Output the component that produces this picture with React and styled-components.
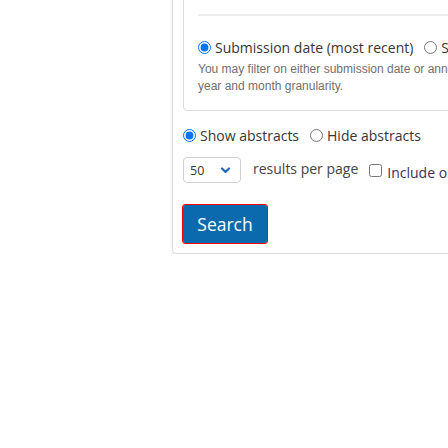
import React from 'react'
import styled, { createGlobalStyle } from 'styled-components'

const GlobalStyle = createGlobalStyle`
  html, body {
    margin: 0;
    padding: 0;
    background: #fff;
    overflow: hidden;
  }
  body {
    font-family: "Open Sans", "Noto Sans", sans-serif;
    color: #363636;
  }
`

const Page = styled.div`
  padding-left: 172px;
  width: 460px;
`

const Card = styled.div`
  margin-top: -30px;
  padding: 10px 10px 10px 10px;
  border: 1px solid #dcdcdc;
  border-radius: 4px;
  box-shadow: 0 2px 3px rgba(0, 0, 0, 0.12);
  display: flex;
  flex-direction: column;
  align-items: flex-start;
`

const Fieldset = styled.div`
  align-self: stretch;
  border: 1px solid #dcdcdc;
  border-radius: 4px;
  padding: 0 0 15px 14px;
`

const Rule = styled.div`
  margin-top: 32px;
  height: 2px;
  background: #ececec;
`

const RadioRow = styled.div`
  display: flex;
  align-items: center;
  height: 22px;
  margin-top: ${p => p.$top}px;
  font-size: 14px;
  white-space: nowrap;
`

const Choice = styled.label`
  display: flex;
  align-items: center;
  gap: 4px;
  margin-right: 11px;
  color: #363636;
`

const Radio = styled.input.attrs({ type: 'radio' })`
  margin: 0;
  width: 13px;
  height: 13px;
`

const Help = styled.p`
  margin: 3px 0 0 0;
  font-family: "Liberation Sans", Arial, sans-serif;
  font-size: 12px;
  line-height: 17px;
  color: #707070;
  white-space: nowrap;
`

const OptionsRow = styled.div`
  display: flex;
  align-items: center;
  margin-top: 11px;
  white-space: nowrap;
`

const SelectBox = styled.div`
  position: relative;
  width: 58px;
  height: 26px;
  box-sizing: border-box;
  border: 1px solid #cfcfcf;
  border-radius: 4px;
`

const Select = styled.select`
  appearance: none;
  border: none;
  background: transparent;
  width: 100%;
  height: 100%;
  padding: 0 0 0 6px;
  font-family: "Open Sans", sans-serif;
  font-size: 12.5px;
  color: #363636;
  outline: none;
`

const Chevron = styled.svg`
  position: absolute;
  left: 37px;
  top: 9px;
  pointer-events: none;
`

const PerPage = styled.span`
  margin-left: 12px;
  font-size: 14px;
  color: #444;
  transform: translateY(-2px);
`

const CheckLabel = styled.label`
  display: flex;
  align-items: center;
  gap: 5px;
  margin-left: 11px;
  font-size: 14px;
  color: #3b2f5a;
`

const Checkbox = styled.input.attrs({ type: 'checkbox' })`
  margin: 0;
  width: 13px;
  height: 13px;
`

const CheckText = styled.span`
  transform: translateY(2px);
`

const SearchButton = styled.button`
  margin-top: 22px;
  width: 84px;
  height: 38px;
  border: none;
  border-radius: 2px;
  background: #0b6aae;
  color: #fff;
  font-family: "Open Sans", sans-serif;
  font-size: 17.5px;
  outline: 1px solid #ff0000;
  outline-offset: 0;
  cursor: pointer;
`

export default function App() {
  return (
    <>
      <GlobalStyle />
      <Page>
        <Card>
          <Fieldset>
            <Rule />
            <RadioRow $top={20}>
              <Choice><Radio name="datetype" defaultChecked />Submission date (most recent)</Choice>
              <Choice><Radio name="datetype" />Submission date (original)</Choice>
            </RadioRow>
            <Help>
              You may filter on either submission date or announcement date. Dates must be at
              <br />
              year and month granularity.
            </Help>
          </Fieldset>
          <RadioRow $top={13}>
            <Choice><Radio name="abstracts" defaultChecked />Show abstracts</Choice>
            <Choice><Radio name="abstracts" />Hide abstracts</Choice>
          </RadioRow>
          <OptionsRow>
            <SelectBox>
              <Select defaultValue="50">
                <option>25</option>
                <option>50</option>
                <option>100</option>
                <option>200</option>
              </Select>
              <Chevron width="9" height="7" viewBox="0 0 9 7">
                <path d="M1 1.5 L4.5 5 L8 1.5" fill="none" stroke="#1e6bb8" strokeWidth="2.2" strokeLinecap="round" strokeLinejoin="round" />
              </Chevron>
            </SelectBox>
            <PerPage>results per page</PerPage>
            <CheckLabel><Checkbox /><CheckText>Include older versions of papers in results</CheckText></CheckLabel>
          </OptionsRow>
          <SearchButton>Search</SearchButton>
        </Card>
      </Page>
    </>
  )
}
